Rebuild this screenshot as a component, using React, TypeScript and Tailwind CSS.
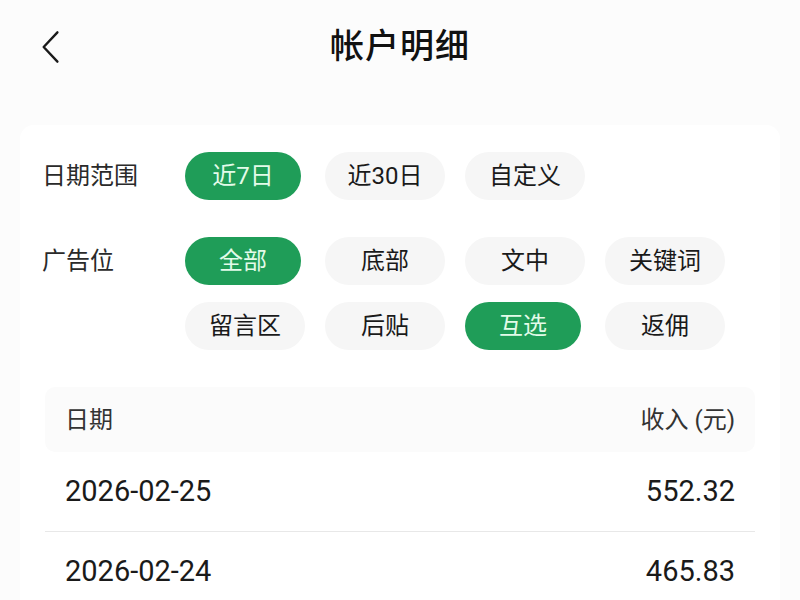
import React, { useState } from 'react';

const font = "font-['Roboto','Noto_Sans_CJK_SC',sans-serif]";

const ranges = ['近7日', '近30日', '自定义'];
const slots = ['全部', '底部', '文中', '关键词', '留言区', '后贴', '互选', '返佣'];
const rows = [
  { date: '2026-02-25', amount: '552.32' },
  { date: '2026-02-24', amount: '465.83' },
];

const BackIcon = () => (
  <svg viewBox="0 0 24 36" className="w-[22px] h-[34px]" fill="none" stroke="#1a1a1a" strokeWidth="2.6" strokeLinecap="round" strokeLinejoin="round">
    <path d="M19 2L4 18l15 16" />
  </svg>
);

function Pill({ label, active, onClick }: { label: string; active: boolean; onClick: () => void }) {
  return (
    <button
      onClick={onClick}
      className={
        active
          ? 'h-[48px] w-[116px] rounded-full bg-[#1f9d58] text-[#e3fbe9] text-[24px] leading-none'
          : 'h-[48px] w-[120px] rounded-full bg-[#f6f6f6] text-[#1a1a1a] text-[24px] leading-none'
      }
    >
      {label}
    </button>
  );
}

export default function App() {
  const [range, setRange] = useState('近7日');
  const [picked, setPicked] = useState<string[]>(['全部', '互选']);

  const toggle = (s: string) =>
    setPicked(prev => (prev.includes(s) ? prev.filter(p => p !== s) : [...prev, s]));

  return (
    <div className={`w-[800px] h-[600px] overflow-hidden bg-[#fcfcfc] ${font}`}>
      <header className="relative h-[92px] flex items-center justify-center">
        <button className="absolute left-[40px] top-[30px]">
          <BackIcon />
        </button>
        <h1 className="text-[34px] font-medium text-[#111] tracking-[1px]">帐户明细</h1>
      </header>

      <main className="mt-[33px] mx-[20px] bg-white rounded-[14px] pt-[27px] px-[22px]">
        <div className="flex items-center">
          <div className="w-[143px] text-[24px] text-[#2a2a2a]">日期范围</div>
          <div className="grid grid-cols-[repeat(4,118px)] gap-x-[22px]">
            {ranges.map(r => (
              <Pill key={r} label={r} active={range === r} onClick={() => setRange(r)} />
            ))}
          </div>
        </div>

        <div className="flex items-start mt-[37px]">
          <div className="w-[143px] h-[48px] flex items-center text-[24px] text-[#2a2a2a]">广告位</div>
          <div className="grid grid-cols-[repeat(4,118px)] gap-x-[22px] gap-y-[17px]">
            {slots.map(s => (
              <Pill key={s} label={s} active={picked.includes(s)} onClick={() => toggle(s)} />
            ))}
          </div>
        </div>

        <div className="mt-[37px] ml-[3px] mr-[3px]">
          <div className="h-[65px] rounded-[10px] bg-[#fbfbfb] px-[20px] flex items-center justify-between text-[24px] text-[#333]">
            <span>日期</span>
            <span>收入 (元)</span>
          </div>
          {rows.map((r, i) => (
            <div
              key={r.date}
              className={`h-[80px] px-[20px] flex items-center justify-between text-[29px] text-[#1a1a1a] ${i === 0 ? 'border-b border-[#e8e8e8]' : ''}`}
            >
              <span>{r.date}</span>
              <span>{r.amount}</span>
            </div>
          ))}
        </div>
      </main>
    </div>
  );
}
